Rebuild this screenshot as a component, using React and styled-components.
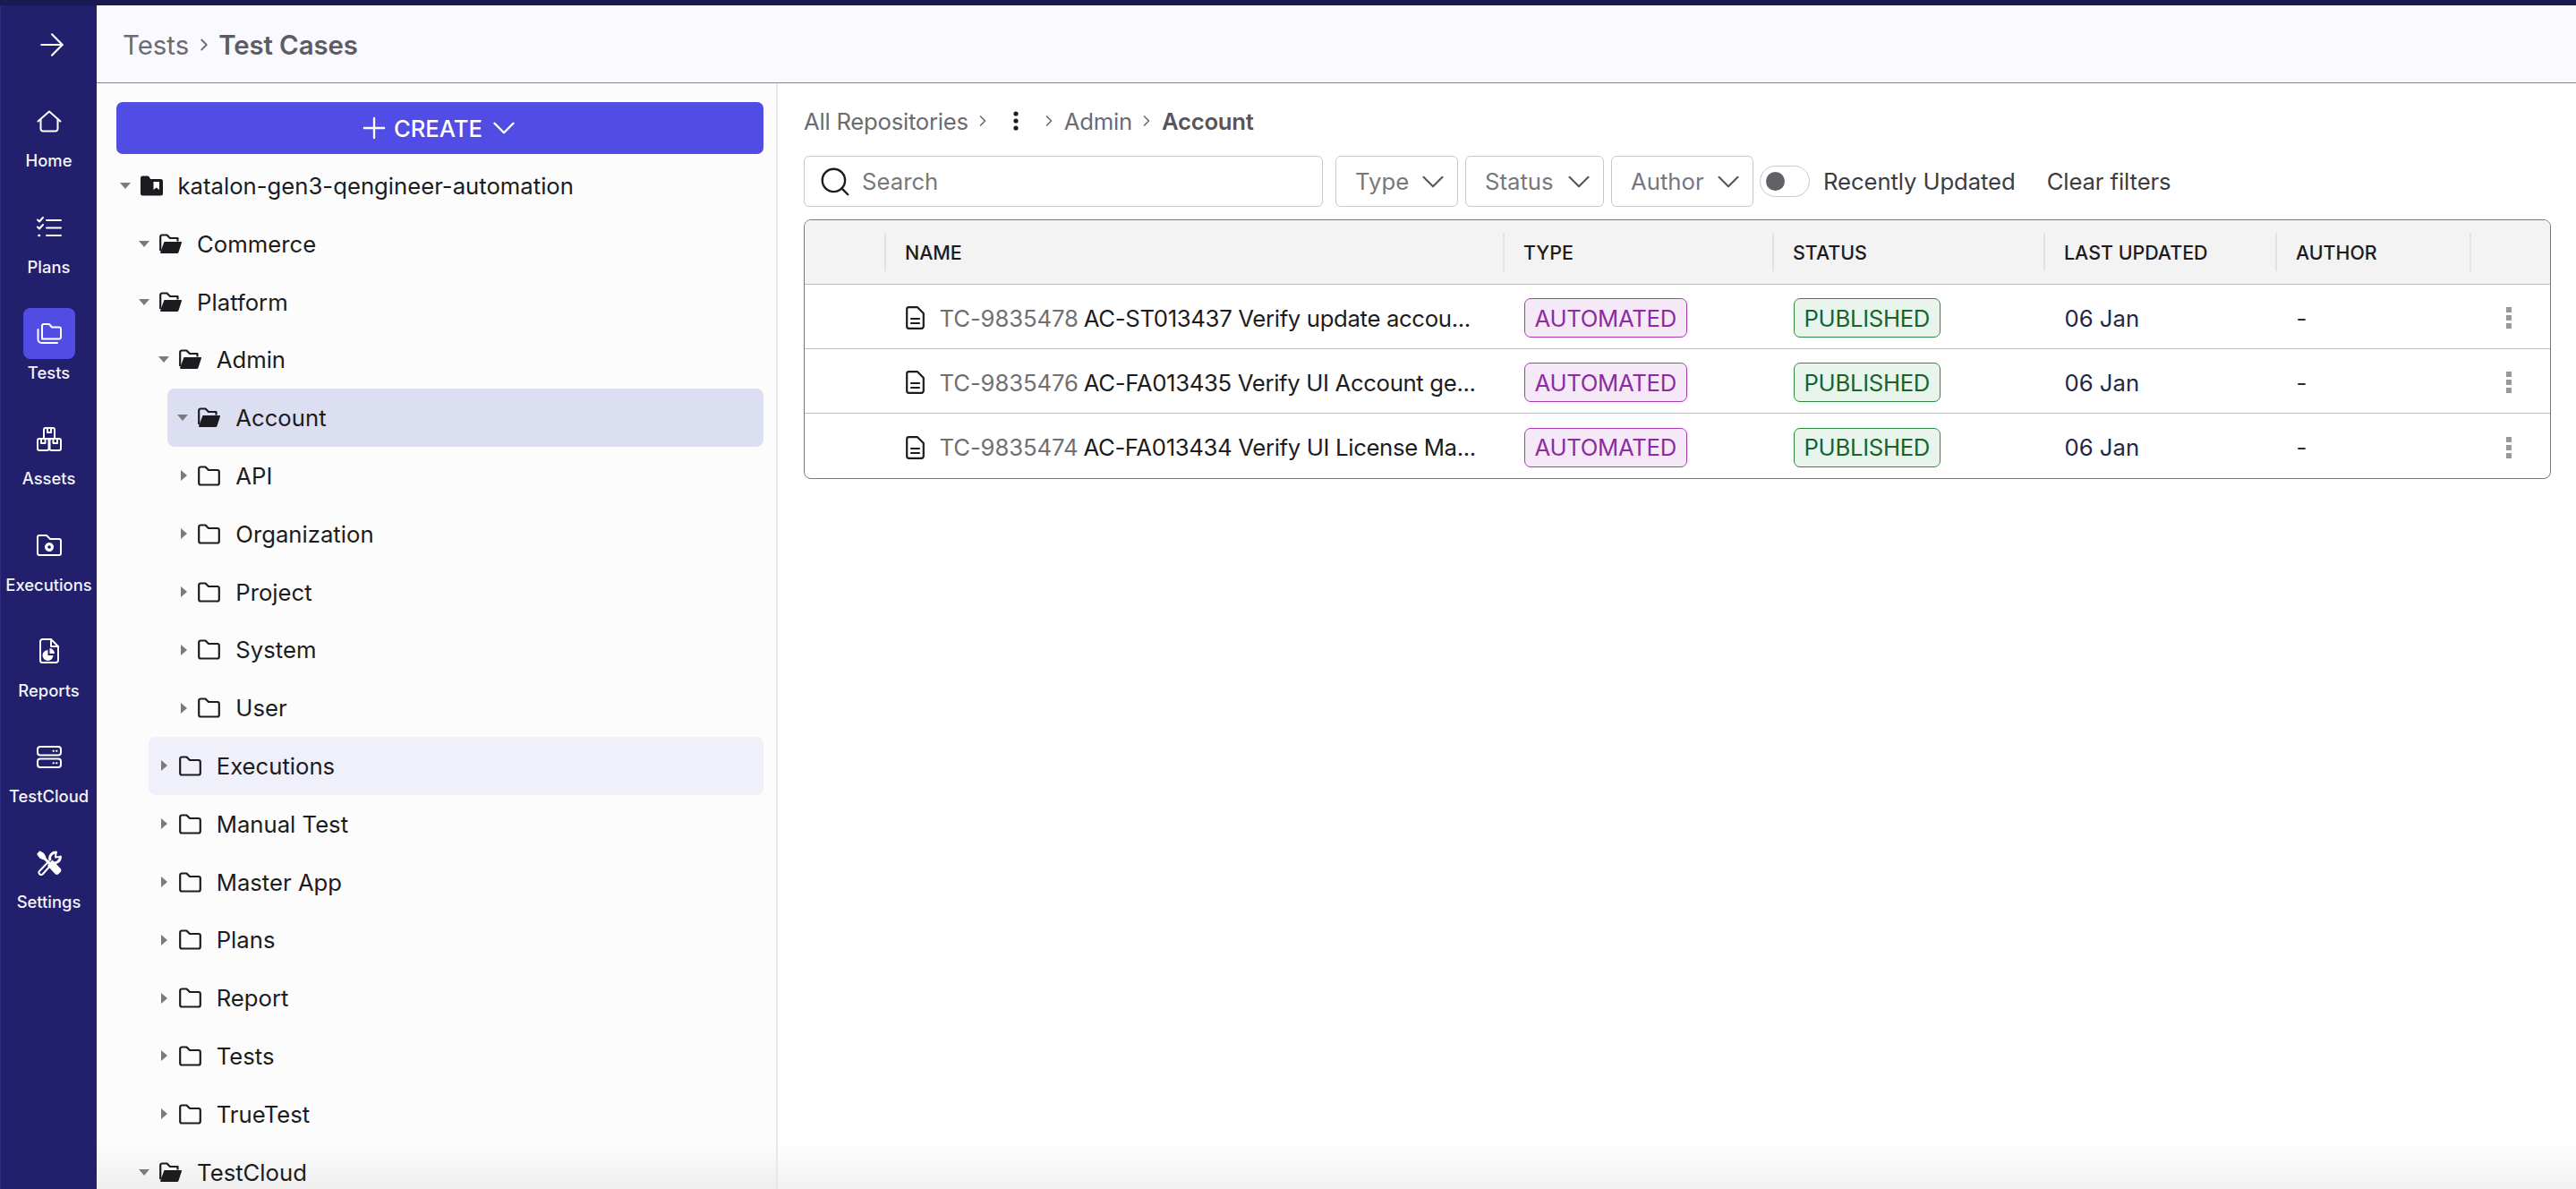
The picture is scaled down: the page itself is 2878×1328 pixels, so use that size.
import React from 'react';
import styled, { createGlobalStyle } from 'styled-components';
import { ArrowRight, ChevronDown, ChevronRight, Plus, Search } from 'lucide-react';

const GlobalStyle = createGlobalStyle`
    html, body {
        margin: 0;
        padding: 0;
        background: #FFFFFF;
    }
    body {
        font-family: Inter, "Noto Sans", sans-serif;
    }
    * {
        box-sizing: border-box;
    }
`;

const Page = styled.div`
    width: 2878px;
    height: 1328px;
    display: flex;
    flex-direction: column;
    overflow: hidden;
`;

const TopStrip = styled.div`
    height: 6px;
    flex-shrink: 0;
    background: #1A1A52;
`;

const Body = styled.div`
    flex: 1;
    min-height: 0;
    display: flex;
`;

const Sidebar = styled.nav`
    width: 108px;
    flex-shrink: 0;
    background: #221F6D;
    border-left: 1px solid #2E2B80;
    display: flex;
    flex-direction: column;
    align-items: center;
`;

const ExpandButton = styled.div`
    width: 100%;
    height: 101.4px;
    padding: 0 0 14px 6px;
    display: flex;
    align-items: center;
    justify-content: center;
    color: #FFFFFF;
`;

const NavItem = styled.div`
    height: 118.3px;
    width: 100%;
    display: flex;
    flex-direction: column;
    align-items: center;
`;

const NavIcon = styled.div`
    width: 58px;
    height: 57px;
    flex-shrink: 0;
    border-radius: 8px;
    display: flex;
    align-items: center;
    justify-content: center;
    color: #FFFFFF;
    background: ${(props) => (props.$active ? '#514CE4' : 'transparent')};
`;

const NavLabel = styled.div`
    margin-top: 3px;
    height: 24px;
    line-height: 24px;
    font-size: 18.4px;
    font-weight: 500;
    color: #F4F4FB;
    white-space: nowrap;
`;

const Main = styled.div`
    flex: 1;
    min-width: 0;
    display: flex;
    flex-direction: column;
`;

const Header = styled.header`
    height: 86.5px;
    flex-shrink: 0;
    background: #F9F9FF;
    border-bottom: 1.5px solid #85858C;
    padding: 3px 0 0 29px;
    display: flex;
    align-items: center;
    font-size: 29.4px;
    color: #6B6B70;
`;

const HeaderLink = styled.span`
    font-weight: 400;
`;

const HeaderChevron = styled(ChevronRight)`
    margin: 0 5.5px;
`;

const HeaderCurrent = styled.span`
    font-weight: 600;
    color: #5C5C62;
    letter-spacing: -0.1px;
`;

const Content = styled.div`
    flex: 1;
    min-height: 0;
    display: flex;
`;

const TreePanel = styled.aside`
    width: 761px;
    flex-shrink: 0;
    background: linear-gradient(to bottom, #FCFCFD calc(100% - 52px), #EFEFF0 100%);
    border-right: 2px solid #E8E8EA;
    padding: 21.5px 14px 0 14.5px;
    overflow: hidden;
`;

const CreateButton = styled.button`
    margin-left: 7.5px;
    width: calc(100% - 7.5px);
    height: 58px;
    border: none;
    border-radius: 7px;
    background: #514CE4;
    color: #FFFFFF;
    font-family: inherit;
    font-size: 25.7px;
    font-weight: 500;
    display: flex;
    align-items: center;
    justify-content: center;
    gap: 2.5px;
`;

const Tree = styled.div`
    margin-top: 3.1px;
`;

const TreeRow = styled.div`
    height: 64.8px;
    margin-left: ${(props) => props.$level * 21.6}px;
    border-radius: 8px;
    display: flex;
    align-items: center;
    font-size: 25.7px;
    color: #1C1C20;
    white-space: nowrap;
    background: ${(props) => props.$bg || 'transparent'};
`;

const CaretBox = styled.div`
    width: 34px;
    flex-shrink: 0;
    display: flex;
    align-items: center;
    justify-content: center;
`;

const CaretDown = styled.div`
    width: 0;
    height: 0;
    border-left: 6px solid transparent;
    border-right: 6px solid transparent;
    border-top: 7.5px solid #7A7A80;
`;

const CaretRight = styled.div`
    margin-left: 2px;
    width: 0;
    height: 0;
    border-top: 6.5px solid transparent;
    border-bottom: 6.5px solid transparent;
    border-left: 7.5px solid #7A7A80;
`;

const TreeIcon = styled.svg`
    width: 25px;
    height: 23px;
    flex-shrink: 0;
    margin-right: 17px;
    display: block;
`;

const RightPanel = styled.section`
    flex: 1;
    min-width: 0;
    padding: 0 28px 0 29px;
    background: linear-gradient(to bottom, #FFFFFF calc(100% - 52px), #F1F1F2 100%);
`;

const Crumbs = styled.div`
    height: 81.5px;
    padding-top: 4px;
    display: flex;
    align-items: center;
    font-size: 25.7px;
    letter-spacing: -0.25px;
    color: #6B6B70;
    white-space: nowrap;
`;

const CrumbChevron = styled(ChevronRight)`
    margin: 0 7px 0 6px;
    color: #6B6B70;
`;

const CrumbDots = styled.svg`
    width: 8px;
    height: 24px;
    margin: 0 16.5px;
`;

const CrumbCurrent = styled.span`
    font-weight: 600;
    color: #55555B;
`;

const Filters = styled.div`
    height: 57px;
    display: flex;
    align-items: center;
`;

const SearchBox = styled.div`
    width: 580px;
    height: 100%;
    border: 1.5px solid #C8C8CC;
    border-radius: 6px;
    padding-left: 15px;
    display: flex;
    align-items: center;
    gap: 11px;
    font-size: 25.7px;
    color: #77777C;
`;

const SearchIcon = styled(Search)`
    color: #1C1C20;
`;

const FilterSelect = styled.div`
    width: ${(props) => props.$width}px;
    height: 100%;
    margin-left: ${(props) => props.$gap}px;
    border: 1.5px solid #C8C8CC;
    border-radius: 6px;
    padding: 0 6px 0 21px;
    display: flex;
    align-items: center;
    justify-content: space-between;
    font-size: 25.7px;
    color: #77777C;
`;

const FilterChevron = styled(ChevronDown)`
    margin-left: -10px;
    flex-shrink: 0;
    color: #55555B;
`;

const Toggle = styled.div`
    width: 56px;
    height: 35px;
    margin-left: 7px;
    border: 1.5px solid #C8C8CC;
    border-radius: 18px;
    padding-left: 6px;
    display: flex;
    align-items: center;
`;

const ToggleThumb = styled.div`
    width: 21px;
    height: 21px;
    border-radius: 50%;
    background: #616166;
`;

const FilterText = styled.div`
    margin-left: ${(props) => props.$gap}px;
    font-size: 25.7px;
    letter-spacing: -0.1px;
    color: #3C3C42;
    white-space: nowrap;
`;

const Table = styled.div`
    margin-top: 14px;
    border: 1px solid #77777C;
    border-radius: 8px;
    overflow: hidden;
`;

const columns = '91px 691px 301px 303px 259px 217px 1fr';

const HeadRow = styled.div`
    height: 72px;
    display: grid;
    grid-template-columns: ${columns};
    align-items: center;
    background: #F3F3F3;
    border-bottom: 1px solid #BDBDC0;
`;

const HeadCell = styled.div`
    height: 43px;
    padding-left: 21px;
    border-right: 2px solid #E2E2E4;
    display: flex;
    align-items: center;
    font-size: 21.4px;
    font-weight: 500;
    color: #1C1C20;
`;

const BodyRow = styled.div`
    height: 72px;
    padding-top: 3px;
    display: grid;
    grid-template-columns: ${columns};
    align-items: center;
    border-bottom: 1px solid #BDBDC0;

    &:last-child {
        border-bottom: none;
    }
`;

const Cell = styled.div`
    padding-left: 21.5px;
    display: flex;
    align-items: center;
    font-size: 25.7px;
    color: #1E2A44;
    white-space: nowrap;
`;

const NameCell = styled(Cell)`
    color: #1C1C20;
`;

const CaseTitle = styled.span`
    letter-spacing: -0.33px;
`;

const DocIcon = styled.svg`
    width: 21px;
    height: 26px;
    margin-right: 17px;
    flex-shrink: 0;
`;

const CaseId = styled.span`
    color: #6F6F72;
    letter-spacing: -0.1px;
    margin-right: 6px;
`;

const Badge = styled.div`
    height: 44px;
    padding: 0 11px;
    border-radius: 7px;
    border: 1.5px solid ${(props) => props.$border};
    background: ${(props) => props.$bg};
    color: ${(props) => props.$color};
    display: flex;
    align-items: center;
    font-size: 25.7px;
    letter-spacing: -0.3px;
`;

const MenuCell = styled.div`
    display: flex;
    justify-content: flex-start;
    padding-left: 39px;
`;

const MenuDots = styled.div`
    width: 6px;
    display: flex;
    flex-direction: column;
    gap: 3px;
`;

const MenuDot = styled.span`
    width: 6px;
    height: 6px;
    background: #99999C;
`;

const HomeIcon = () => (
    <svg width="28" height="25" viewBox="0 0 28 25" fill="none" stroke="currentColor" strokeWidth="2" strokeLinecap="round" strokeLinejoin="round">
        <path d="M1.5 12.5 L14 1.5 L26.5 12.5" />
        <path d="M4.5 10.5 V21 A2.5 2.5 0 0 0 7 23.5 H21 A2.5 2.5 0 0 0 23.5 21 V10.5" />
    </svg>
);

const PlansIcon = () => (
    <svg width="28" height="24" viewBox="0 0 28 24" fill="none" stroke="currentColor" strokeWidth="2" strokeLinecap="round" strokeLinejoin="round">
        <path d="M1 3.5 L3 5.5 L7 1" />
        <path d="M1 11.5 L3 13.5 L7 9" />
        <path d="M2.5 21 H3" strokeWidth="2.6" />
        <path d="M11 4 H27 M11 12.5 H27 M11 21 H27" />
    </svg>
);

const TestsIcon = () => (
    <svg width="28" height="23" viewBox="0 0 28 23" fill="none" stroke="currentColor" strokeWidth="2" strokeLinecap="round" strokeLinejoin="round">
        <path d="M6 17.5 V3 A2 2 0 0 1 8 1 H14 L17 4.5 H25 A2 2 0 0 1 27 6.5 V15.5 A2 2 0 0 1 25 17.5 Z" />
        <path d="M1.5 7 V18 A4 4 0 0 0 5.5 22 H23" />
    </svg>
);

const AssetsIcon = () => (
    <svg width="28" height="27" viewBox="0 0 28 27" fill="none" stroke="currentColor" strokeWidth="2" strokeLinecap="round" strokeLinejoin="round">
        <path d="M8 13 V3 A2 2 0 0 1 10 1 H18 A2 2 0 0 1 20 3 V13 Z" />
        <path d="M12 1 V6 H16 V1" />
        <rect x="1" y="13" width="12.5" height="13" rx="2" />
        <rect x="14.5" y="13" width="12.5" height="13" rx="2" />
        <path d="M5 13 V18 H9.5 V13 M18.5 13 V18 H23 V13" />
    </svg>
);

const ExecutionsIcon = () => (
    <svg width="28" height="24" viewBox="0 0 28 24" fill="none" stroke="currentColor" strokeWidth="2" strokeLinecap="round" strokeLinejoin="round">
        <path d="M1 3 A2 2 0 0 1 3 1 H11 L15 5 H25 A2 2 0 0 1 27 7 V21 A2 2 0 0 1 25 23 H3 A2 2 0 0 1 1 21 Z" />
        <circle cx="14" cy="14" r="3.4" strokeWidth="3.2" strokeDasharray="2.4 0.8" />
    </svg>
);

const ReportsIcon = () => (
    <svg width="22" height="28" viewBox="0 0 22 28" fill="none" stroke="currentColor" strokeWidth="2" strokeLinecap="round" strokeLinejoin="round">
        <path d="M3.5 1 H13 L21 9 V24.5 A2.5 2.5 0 0 1 18.5 27 H3.5 A2.5 2.5 0 0 1 1 24.5 V3.5 A2.5 2.5 0 0 1 3.5 1 Z" />
        <path d="M13 1 V9 H21" />
        <path d="M9.5 13 A6 6 0 1 0 15.5 19 H9.5 Z" fill="currentColor" stroke="none" />
        <path d="M11.5 11 A6 6 0 0 1 17 17 H11.5 Z" fill="currentColor" stroke="none" />
    </svg>
);

const CloudIcon = () => (
    <svg width="28" height="25" viewBox="0 0 28 25" fill="none" stroke="currentColor" strokeWidth="2" strokeLinecap="round">
        <rect x="1" y="1" width="26" height="9.5" rx="3" />
        <rect x="1" y="14.5" width="26" height="9.5" rx="3" />
        <path d="M18.5 5.8 H19 M22 5.8 H22.5 M18.5 19.3 H19 M22 19.3 H22.5" />
    </svg>
);

const SettingsIcon = () => (
    <svg width="28" height="28" viewBox="0 0 28 28" fill="none" stroke="currentColor" strokeLinecap="round" strokeLinejoin="round">
        <path d="M13.5 12 L3 23 A2.5 2.5 0 0 0 6.5 26.5 L16.5 15.5" strokeWidth="2" />
        <path d="M21.5 2 A6.6 6.6 0 0 0 14.8 10 M18 13.6 A6.6 6.6 0 0 0 26.4 7" strokeWidth="3" />
        <path d="M21.5 2.5 L21 7.5 L26 7" strokeWidth="2" />
        <path d="M0.8 3.5 L3.5 0.8 L8 3.5 L10 7.5 L7.5 10 L3.5 8 Z" fill="currentColor" stroke="currentColor" strokeWidth="1" />
        <path d="M8 8 L14 14" strokeWidth="3" />
        <path d="M14.5 13.5 L17.5 10.5 L27 20.5 A3 3 0 0 1 27 23.5 L24 26.5 A3 3 0 0 1 21 26.5 L12 17 Z" fill="currentColor" stroke="none" />
    </svg>
);

const FolderClosed = () => (
    <TreeIcon viewBox="0 0 25 23" fill="none" stroke="#1C1C20" strokeWidth="2.2" strokeLinejoin="round">
        <path d="M1.2 3.5 A2 2 0 0 1 3.2 1.5 H8.5 L12 5 H21.8 A2 2 0 0 1 23.8 7 V19.5 A2 2 0 0 1 21.8 21.5 H3.2 A2 2 0 0 1 1.2 19.5 Z" />
    </TreeIcon>
);

const FolderOpen = () => (
    <TreeIcon viewBox="0 0 25 23">
        <path d="M1.2 19 V3.5 A2 2 0 0 1 3.2 1.5 H8.5 L12 5 H20.5 V8.5" fill="none" stroke="#1C1C20" strokeWidth="2.2" strokeLinejoin="round" />
        <path d="M5.5 9 H24.2 A0.8 0.8 0 0 1 25 10 L21.5 20.8 A1.7 1.7 0 0 1 19.9 22 H2 A1.5 1.5 0 0 1 1 21 Z" fill="#1C1C20" />
    </TreeIcon>
);

const RepoIcon = () => (
    <TreeIcon viewBox="0 0 25 23">
        <path d="M0 3 A2.5 2.5 0 0 1 2.5 0.5 H7.5 A2.5 2.5 0 0 1 10 2 L11 4 H22.5 A2.5 2.5 0 0 1 25 6.5 V20 A2.5 2.5 0 0 1 22.5 22.5 H2.5 A2.5 2.5 0 0 1 0 20 Z" fill="#1C1C20" />
        <path d="M14.5 7 H21 V16 L17.75 13.5 L14.5 16 Z" fill="#FFFFFF" />
    </TreeIcon>
);

const navItems = [
    { label: 'Home', icon: <HomeIcon /> },
    { label: 'Plans', icon: <PlansIcon /> },
    { label: 'Tests', icon: <TestsIcon />, active: true },
    { label: 'Assets', icon: <AssetsIcon /> },
    { label: 'Executions', icon: <ExecutionsIcon /> },
    { label: 'Reports', icon: <ReportsIcon /> },
    { label: 'TestCloud', icon: <CloudIcon /> },
    { label: 'Settings', icon: <SettingsIcon /> },
];

const treeItems = [
    { name: 'katalon-gen3-qengineer-automation', level: 0, kind: 'repo' },
    { name: 'Commerce', level: 1, kind: 'open' },
    { name: 'Platform', level: 1, kind: 'open' },
    { name: 'Admin', level: 2, kind: 'open' },
    { name: 'Account', level: 3, kind: 'open', bg: '#DCDFF2' },
    { name: 'API', level: 3 },
    { name: 'Organization', level: 3 },
    { name: 'Project', level: 3 },
    { name: 'System', level: 3 },
    { name: 'User', level: 3 },
    { name: 'Executions', level: 2, bg: '#EFF0F9' },
    { name: 'Manual Test', level: 2 },
    { name: 'Master App', level: 2 },
    { name: 'Plans', level: 2 },
    { name: 'Report', level: 2 },
    { name: 'Tests', level: 2 },
    { name: 'TrueTest', level: 2 },
    { name: 'TestCloud', level: 1, kind: 'open' },
];

const rows = [
    { id: 'TC-9835478', name: 'AC-ST013437 Verify update accou...' },
    { id: 'TC-9835476', name: 'AC-FA013435 Verify UI Account ge...' },
    { id: 'TC-9835474', name: 'AC-FA013434 Verify UI License Ma...' },
];

const TreeNode = ({ item }) => {
    const { name, level, kind, bg } = item;
    return (
        <TreeRow $level={level} $bg={bg}>
            <CaretBox>{kind ? <CaretDown /> : <CaretRight />}</CaretBox>
            {kind === 'repo' && <RepoIcon />}
            {kind === 'open' && <FolderOpen />}
            {!kind && <FolderClosed />}
            {name}
        </TreeRow>
    );
};

const App = () => (
    <Page>
        <GlobalStyle />
        <TopStrip />
        <Body>
            <Sidebar>
                <ExpandButton><ArrowRight size={40} strokeWidth={1.3} /></ExpandButton>
                {navItems.map((item) => (
                    <NavItem key={item.label}>
                        <NavIcon $active={item.active}>{item.icon}</NavIcon>
                        <NavLabel>{item.label}</NavLabel>
                    </NavItem>
                ))}
            </Sidebar>
            <Main>
                <Header>
                    <HeaderLink>Tests</HeaderLink>
                    <HeaderChevron size={22} strokeWidth={2} />
                    <HeaderCurrent>Test Cases</HeaderCurrent>
                </Header>
                <Content>
                    <TreePanel>
                        <CreateButton>
                            <Plus size={38} strokeWidth={1.5} />
                            CREATE
                            <ChevronDown size={42} strokeWidth={1.4} />
                        </CreateButton>
                        <Tree>
                            {treeItems.map((item) => <TreeNode key={item.name} item={item} />)}
                        </Tree>
                    </TreePanel>
                    <RightPanel>
                        <Crumbs>
                            All Repositories
                            <CrumbChevron size={20} />
                            <CrumbDots viewBox="0 0 8 24" fill="#1C1C20">
                                <circle cx="4" cy="4" r="2.6" />
                                <circle cx="4" cy="12" r="2.6" />
                                <circle cx="4" cy="20" r="2.6" />
                            </CrumbDots>
                            <CrumbChevron size={20} />
                            Admin
                            <CrumbChevron size={20} />
                            <CrumbCurrent>Account</CrumbCurrent>
                        </Crumbs>
                        <Filters>
                            <SearchBox>
                                <SearchIcon size={38} strokeWidth={1.5} />
                                Search
                            </SearchBox>
                            <FilterSelect $width={137} $gap={14}>Type<FilterChevron size={42} strokeWidth={1.2} /></FilterSelect>
                            <FilterSelect $width={155} $gap={8}>Status<FilterChevron size={42} strokeWidth={1.2} /></FilterSelect>
                            <FilterSelect $width={159} $gap={8}>Author<FilterChevron size={42} strokeWidth={1.2} /></FilterSelect>
                            <Toggle><ToggleThumb /></Toggle>
                            <FilterText $gap={15}>Recently Updated</FilterText>
                            <FilterText $gap={35}>Clear filters</FilterText>
                        </Filters>
                        <Table>
                            <HeadRow>
                                <HeadCell />
                                <HeadCell>NAME</HeadCell>
                                <HeadCell>TYPE</HeadCell>
                                <HeadCell>STATUS</HeadCell>
                                <HeadCell>LAST UPDATED</HeadCell>
                                <HeadCell>AUTHOR</HeadCell>
                            </HeadRow>
                            {rows.map((row) => (
                                <BodyRow key={row.id}>
                                    <div />
                                    <NameCell>
                                        <DocIcon viewBox="0 0 21 26" fill="none" stroke="#1C1C20" strokeWidth="2.2" strokeLinejoin="round" strokeLinecap="round">
                                            <path d="M3.5 1.2 H13 L19.8 8 V22.5 A2.3 2.3 0 0 1 17.5 24.8 H3.5 A2.3 2.3 0 0 1 1.2 22.5 V3.5 A2.3 2.3 0 0 1 3.5 1.2 Z" />
                                            <path d="M6 14 H15 M6 19 H15" />
                                        </DocIcon>
                                        <CaseId>{row.id}</CaseId>
                                        <CaseTitle>{row.name}</CaseTitle>
                                    </NameCell>
                                    <Cell><Badge $border="#A83AB5" $bg="#F5E9F8" $color="#8E2B9F">AUTOMATED</Badge></Cell>
                                    <Cell><Badge $border="#2A8A3E" $bg="#E9F5EC" $color="#16632C">PUBLISHED</Badge></Cell>
                                    <Cell>06 Jan</Cell>
                                    <Cell>-</Cell>
                                    <MenuCell>
                                        <MenuDots><MenuDot /><MenuDot /><MenuDot /></MenuDots>
                                    </MenuCell>
                                </BodyRow>
                            ))}
                        </Table>
                    </RightPanel>
                </Content>
            </Main>
        </Body>
    </Page>
);

export default App;
